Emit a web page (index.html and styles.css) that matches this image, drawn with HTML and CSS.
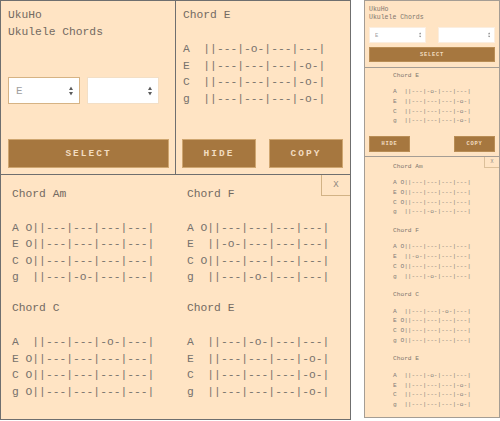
FILE: index.html
```html
<!DOCTYPE html>
<html lang="en">
<head>
<meta charset="utf-8">
<title>UkuHo - Ukulele Chords</title>
<link rel="stylesheet" href="styles.css">
</head>
<body>
<div class="page">
  <section class="app app--desktop">
    <div class="intro">
      <h1 class="brand"><span>UkuHo</span><span>Ukulele Chords</span></h1>
      <div class="pickers">
        <div class="picker picker--active">
          <select class="picker__select"><option>E</option></select>
          <svg class="picker__icon" viewBox="0 0 4 9"><path d="M2 0L4 3.4H0Z M2 9L0 5.6H4Z"/></svg>
        </div>
        <div class="picker">
          <select class="picker__select"><option></option></select>
          <svg class="picker__icon" viewBox="0 0 4 9"><path d="M2 0L4 3.4H0Z M2 9L0 5.6H4Z"/></svg>
        </div>
      </div>
      <button class="btn btn--wide">SELECT</button>
    </div>
    <div class="current">
      <div class="chord">
        <h2 class="chord__name">Chord E</h2>
<pre class="chord__tab">A  ||---|-o-|---|---|
E  ||---|---|---|-o-|
C  ||---|---|---|-o-|
g  ||---|---|---|-o-|</pre>
      </div>
      <div class="actions">
        <button class="btn btn--half">HIDE</button>
        <button class="btn btn--half">COPY</button>
      </div>
    </div>
    <div class="list">
      <button class="close">X</button>
      <div class="chord-grid">
        <div class="chord">
          <h2 class="chord__name">Chord Am</h2>
<pre class="chord__tab">A O||---|---|---|---|
E O||---|---|---|---|
C O||---|---|---|---|
g  ||---|-o-|---|---|</pre>
        </div>
        <div class="chord">
          <h2 class="chord__name">Chord F</h2>
<pre class="chord__tab">A O||---|---|---|---|
E  ||-o-|---|---|---|
C O||---|---|---|---|
g  ||---|-o-|---|---|</pre>
        </div>
        <div class="chord">
          <h2 class="chord__name">Chord C</h2>
<pre class="chord__tab">A  ||---|---|-o-|---|
E O||---|---|---|---|
C O||---|---|---|---|
g O||---|---|---|---|</pre>
        </div>
        <div class="chord">
          <h2 class="chord__name">Chord E</h2>
<pre class="chord__tab">A  ||---|-o-|---|---|
E  ||---|---|---|-o-|
C  ||---|---|---|-o-|
g  ||---|---|---|-o-|</pre>
        </div>
      </div>
    </div>
  </section>

  <section class="app app--mobile">
    <div class="intro">
      <h1 class="brand"><span>UkuHo</span><span>Ukulele Chords</span></h1>
      <div class="pickers">
        <div class="picker">
          <select class="picker__select"><option>E</option></select>
          <svg class="picker__icon" viewBox="0 0 4 9"><path d="M2 0L4 3.4H0Z M2 9L0 5.6H4Z"/></svg>
        </div>
        <div class="picker">
          <select class="picker__select"><option></option></select>
          <svg class="picker__icon" viewBox="0 0 4 9"><path d="M2 0L4 3.4H0Z M2 9L0 5.6H4Z"/></svg>
        </div>
      </div>
      <button class="btn btn--wide">SELECT</button>
    </div>
    <div class="current">
      <div class="chord">
        <h2 class="chord__name">Chord E</h2>
<pre class="chord__tab">A  ||---|-o-|---|---|
E  ||---|---|---|-o-|
C  ||---|---|---|-o-|
g  ||---|---|---|-o-|</pre>
      </div>
      <div class="actions">
        <button class="btn btn--half">HIDE</button>
        <button class="btn btn--half">COPY</button>
      </div>
    </div>
    <div class="list">
      <button class="close">X</button>
      <div class="chord-grid">
        <div class="chord">
          <h2 class="chord__name">Chord Am</h2>
<pre class="chord__tab">A O||---|---|---|---|
E O||---|---|---|---|
C O||---|---|---|---|
g  ||---|-o-|---|---|</pre>
        </div>
        <div class="chord">
          <h2 class="chord__name">Chord F</h2>
<pre class="chord__tab">A O||---|---|---|---|
E  ||-o-|---|---|---|
C O||---|---|---|---|
g  ||---|-o-|---|---|</pre>
        </div>
        <div class="chord">
          <h2 class="chord__name">Chord C</h2>
<pre class="chord__tab">A  ||---|---|-o-|---|
E O||---|---|---|---|
C O||---|---|---|---|
g O||---|---|---|---|</pre>
        </div>
        <div class="chord">
          <h2 class="chord__name">Chord E</h2>
<pre class="chord__tab">A  ||---|-o-|---|---|
E  ||---|---|---|-o-|
C  ||---|---|---|-o-|
g  ||---|---|---|-o-|</pre>
        </div>
      </div>
    </div>
  </section>
</div>
</body>
</html>
```
FILE: styles.css
```css
* { box-sizing: border-box; }

body {
  margin: 0;
  background: #ffffff;
  font-family: "Liberation Mono", "DejaVu Sans Mono", monospace;
}

.page {
  display: flex;
  align-items: flex-start;
  gap: 13px;
}

.app {
  background: #ffe4c4;
  border: 1px solid #6f6f6f;
  color: #736a62;
}

h1, h2, pre { margin: 0; font-weight: normal; }

.brand { display: flex; flex-direction: column; }

.pickers { display: flex; }
.picker { position: relative; }
.picker__select {
  -webkit-appearance: none;
  appearance: none;
  display: block;
  width: 100%;
  height: 100%;
  margin: 0;
  background: #ffffff;
  border: 1px solid #f3dfc6;
  border-radius: 0;
  color: #a0a0a0;
  font-family: "Liberation Mono", "DejaVu Sans Mono", monospace;
}
.picker--active .picker__select { border-color: #d6b384; }
.picker__icon {
  position: absolute;
  top: 50%;
  transform: translateY(-50%);
  fill: #5c5c5c;
  pointer-events: none;
}

.btn {
  display: block;
  margin: 0;
  padding: 0;
  background: #a6773f;
  border: 1px solid #cfa670;
  color: #f2dcc0;
  font-family: "Liberation Mono", "DejaVu Sans Mono", monospace;
  font-weight: bold;
  text-align: center;
}

.chord__tab {
  font-family: "Liberation Mono", "DejaVu Sans Mono", monospace;
  color: #77726d;
}

.current { display: flex; flex-direction: column; }
.actions { display: flex; justify-content: space-between; margin-top: auto; }

.list { position: relative; }
.close {
  position: absolute;
  top: 0;
  right: 0;
  margin: 0;
  padding: 0;
  background: transparent;
  border: 0;
  border-left: 1px solid #d2b285;
  border-bottom: 1px solid #d2b285;
  color: #8d8780;
  font-family: "Liberation Mono", "DejaVu Sans Mono", monospace;
}

/* ---------- desktop ---------- */
.app--desktop {
  width: 351px;
  height: 420px;
  display: grid;
  grid-template-columns: 175px 1fr;
  grid-template-rows: auto 1fr;
}
.app--desktop .intro {
  border-right: 1px solid #6f6f6f;
  border-bottom: 1px solid #6f6f6f;
  padding: 6px 6px 6px 7px;
  display: flex;
  flex-direction: column;
}
.app--desktop .brand { font-size: 11.3px; line-height: 17px; }
.app--desktop .pickers { margin-top: 36px; gap: 7px; height: 27px; }
.app--desktop .picker { width: 72px; }
.app--desktop .picker__select { padding-left: 7px; font-size: 11px; }
.app--desktop .picker__icon { right: 7px; width: 4px; height: 9px; }
.app--desktop .btn { font-size: 9.5px; letter-spacing: 2px; }
.app--desktop .btn--wide { margin-top: 35px; height: 29px; width: 100%; }
.app--desktop .current {
  border-bottom: 1px solid #6f6f6f;
  padding: 6px 7px 6px 6px;
}
.app--desktop .current .chord { padding-left: 1px; }
.app--desktop .btn--half { width: 74px; height: 29px; }
.app--desktop .chord__name { font-size: 11.3px; line-height: 17px; }
.app--desktop .chord__tab { margin-top: 17px; font-size: 11.3px; line-height: 16.5px; }
.app--desktop .list { grid-column: 1 / -1; padding: 10.5px 0 0 11px; }
.app--desktop .chord-grid {
  display: grid;
  grid-template-columns: 175px 1fr;
  row-gap: 14.5px;
}
.app--desktop .close { width: 29px; height: 21px; font-size: 9px; }

/* ---------- mobile ---------- */
.app--mobile {
  width: 136px;
  height: 418px;
  display: flex;
  flex-direction: column;
  border-color: #a59d94;
  color: #80776e;
}
.app--mobile .intro {
  border-bottom: 1px solid #a59d94;
  padding: 4.5px 4px 5px;
}
.app--mobile .brand { font-size: 6.5px; line-height: 8.5px; }
.app--mobile .pickers { margin-top: 4.5px; gap: 12px; height: 16px; }
.app--mobile .picker { flex: 1; }
.app--mobile .picker__select { padding-left: 5px; font-size: 5.5px; border-color: #fbeee0; }
.app--mobile .picker__icon { right: 5px; width: 2.4px; height: 5.4px; fill: #8a8a8a; }
.app--mobile .btn { font-size: 5.4px; letter-spacing: 0.8px; border-color: #b98d55; }
.app--mobile .btn--wide { margin-top: 4px; height: 15px; width: 100%; }
.app--mobile .current {
  height: 89px;
  border-bottom: 1px solid #a59d94;
  padding: 2.5px 4px 4px;
}
.app--mobile .chord { width: max-content; margin: 0 auto; }
.app--mobile .btn--half { width: 41px; height: 16px; }
.app--mobile .chord__name { font-size: 6.2px; line-height: 9px; }
.app--mobile .chord__tab { margin-top: 7.6px; font-size: 6.2px; line-height: 9.7px; color: #827e7a; }
.app--mobile .list { flex: 1; padding-top: 4.5px; }
.app--mobile .chord-grid { display: flex; flex-direction: column; row-gap: 8.9px; }
.app--mobile .close { width: 15px; height: 11px; font-size: 5px; border-color: #dcc09a; }
```
